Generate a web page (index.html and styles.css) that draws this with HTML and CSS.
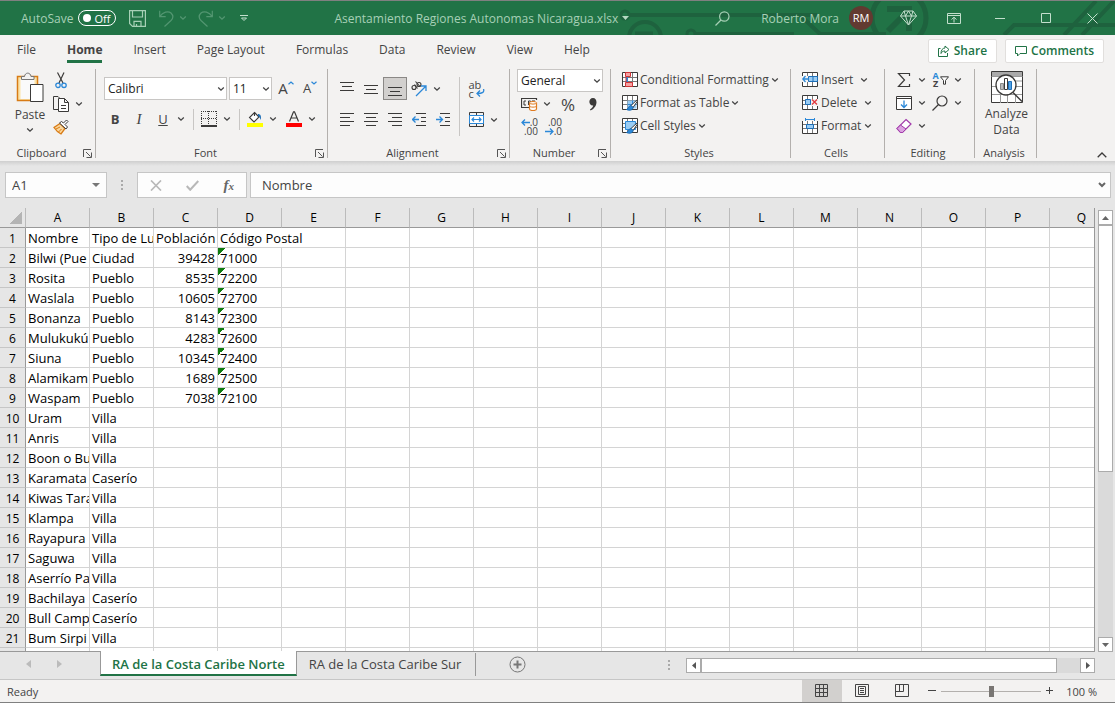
FILE: index.html
```html
<!DOCTYPE html>
<html lang="en">
<head>
  <meta charset="UTF-8">
  <meta name="viewport" content="width=device-width, initial-scale=1.0">
  <title>Asentamiento Regiones Autonomas Nicaragua.xlsx</title>
  <link rel="stylesheet" href="styles.css">
</head>
<body>
  <svg class="defs" width="0" height="0">
    <symbol id="chev" viewBox="0 0 8 8"><path d="M1.2 2.6L4 5.2L6.8 2.6" fill="none" stroke="currentColor" stroke-width="1.3"/></symbol>
    <symbol id="launch" viewBox="0 0 9 9"><path d="M.5 8V.5H8M3 3l4.500 4.500M8.500 3.500v5h-5" fill="none" stroke="#555"/></symbol>
    <symbol id="cellgrid" viewBox="0 0 16 16"><path d="M.5.5h15v14H.5z" fill="#fff" stroke="#3b3a39"/><path d="M5.500 1v13M10.500 1v13M1 5.500h14M1 9.500h14" stroke="#777" fill="none"/></symbol>
    <symbol id="brush" viewBox="0 0 12 12"><path d="M11.500.5L5 6.500l2 2L11.500 2z" fill="#fff" stroke="#3b3a39"/><path d="M5 6.500C2.500 6.500 3 9.500.5 10.500c3 1.500 6.500.5 6.500-2z" fill="#2b88d8" stroke="#1e6fb8"/></symbol>
  </svg>

  <header class="titlebar">
    <svg class="circuit" width="497" height="34" viewBox="0 0 497 34" fill="none" stroke="#1e623e" stroke-width="4">
      <circle cx="7" cy="14" r="4" stroke-width="3"/><path d="M12 14h187"/>
      <circle cx="27" cy="37" r="16"/><path d="M17 33h18" stroke-width="5"/>
      <circle cx="73" cy="33" r="4" stroke-width="3"/><path d="M78 33h98M82 14h100l20 19h66"/>
      <circle cx="281" cy="17" r="27" stroke-width="5"/>
      <path d="M270 30L291 9M269 8h22v22" stroke-width="6"/>
      <path d="M386 34l10-10h101M446 34L478 0M464 34L496 0"/>
    </svg>
    <div class="quick">
      <label class="autosave">AutoSave
        <input type="checkbox">
        <span class="switch"><i></i>Off</span>
      </label>
      <button class="plain save" aria-label="Save"><svg width="17" height="17" viewBox="0 0 17 17" fill="none" stroke="#a7d0b6" stroke-width="1.2"><path d="M.6.6h15.800v15.800H3.500L.6 13.500zM3.500.6v6.400h10V.6M5 16.400v-5h7v5M7.500 16.400v-2.500"/></svg></button>
      <button class="plain undo" aria-label="Undo"><svg width="15" height="17" viewBox="0 0 15 17" fill="none" stroke="#539671" stroke-width="1.2"><path d="M.7.7v6h6M.7 6.700C4 2 9 .5 12 3c2.500 2.500 2 5.500 0 7.500L5.500 16.500"/></svg></button>
      <button class="plain" aria-label="Undo list"><svg width="8" height="8" color="#539671"><use href="#chev"/></svg></button>
      <button class="plain redo" aria-label="Redo"><svg width="15" height="17" viewBox="0 0 15 17" fill="none" stroke="#539671" stroke-width="1.2"><path d="M14.300.7v6h-6M14.300 6.700C11 2 6 .5 3 3c-2.500 2.500-2 5.500 0 7.500l6.500 6"/></svg></button>
      <button class="plain" aria-label="Redo list"><svg width="8" height="8" color="#539671"><use href="#chev"/></svg></button>
      <button class="plain more" aria-label="Customize toolbar"><svg width="8" height="8" viewBox="0 0 8 8" fill="none" stroke="#c3dfcd"><path d="M0 1.500h8M1.500 4L4 6.500L6.500 4z"/></svg></button>
    </div>
    <div class="doc">Asentamiento Regiones Autonomas Nicaragua.xlsx
      <svg width="7" height="4" viewBox="0 0 7 4"><path d="M0 0h7L3.500 4z" fill="#b5d8c2"/></svg>
    </div>
    <div class="account">
      <button class="plain" aria-label="Search"><svg width="15" height="15" viewBox="0 0 15 15" fill="none" stroke="#a7d0b6" stroke-width="1.200"><circle cx="9.300" cy="5.500" r="4.700"/><path d="M6 9L.5 14.500"/></svg></button>
      <span class="user">Roberto Mora</span>
      <span class="avatar">RM</span>
      <button class="plain gem" aria-label="Premium"><svg width="17" height="16" viewBox="0 0 17 16" fill="none" stroke="#c3dfcd"><path d="M4 1h9l3.500 5L8.500 15L.5 6zM.5 6h16M4 1l1.500 5l3 9l3-9L13 1M5.500 6L8.500 1l3 5"/></svg></button>
      <button class="plain display" aria-label="Ribbon display options"><svg width="14" height="11" viewBox="0 0 14 11" fill="none" stroke="#c3dfcd"><path d="M.5.5h13v10H.5zM.5 2.500h13M7 9.500v-5M4.500 6.500L7 4.200l2.500 2.300"/></svg></button>
      <button class="plain win" aria-label="Minimize"><svg width="11" height="11" viewBox="0 0 11 11"><path d="M0 5.500h10" stroke="#c3dfcd"/></svg></button>
      <button class="plain win" aria-label="Maximize"><svg width="11" height="11" viewBox="0 0 11 11"><path d="M.5.5h9v9h-9z" fill="none" stroke="#c3dfcd"/></svg></button>
      <button class="plain win" aria-label="Close"><svg width="11" height="11" viewBox="0 0 11 11"><path d="M.5.5l10 10M10.500.5l-10 10" stroke="#c3dfcd"/></svg></button>
    </div>
  </header>

  <nav class="tabs">
    <a href="#">File</a>
    <a href="#" class="active">Home</a>
    <a href="#">Insert</a>
    <a href="#">Page Layout</a>
    <a href="#">Formulas</a>
    <a href="#">Data</a>
    <a href="#">Review</a>
    <a href="#">View</a>
    <a href="#">Help</a>
    <div class="share">
      <button><svg width="12" height="12" viewBox="0 0 12 12" fill="none" stroke="#217346"><path d="M2.500 3.500h-2v8h9V8"/><path d="M7 1l4 3.500L7 8V6C5 6 4 6.500 3 8.500C3 5 4.500 3.200 7 3z"/></svg>Share</button>
      <button><svg width="12" height="12" viewBox="0 0 12 12" fill="none" stroke="#217346"><path d="M.5 1.500h11v7H5l-2.500 2.500V8.500h-2z"/></svg>Comments</button>
    </div>
  </nav>

  <section class="ribbon">
    <div class="group clipboard">
      <div class="tools">
        <button class="big paste">
          <svg width="28" height="31" viewBox="0 0 28 31"><path d="M1.500 4.500h20v24h-20z" fill="#fbe3a7" stroke="#d87b15" stroke-width="1.500"/><path d="M4.500 7h14v20h-14z" fill="#fafafa"/><path d="M5.500 7.500v-3h3c.5-4.500 6-4.500 6.500 0h3v3z" fill="#f3f2f1" stroke="#777"/><path d="M14.500 12.500h12.500v17H14.500z" fill="#fff" stroke="#3b3a39"/></svg>
          Paste
          <svg width="8" height="8"><use href="#chev"/></svg>
        </button>
        <div class="stack">
          <button class="icon" aria-label="Cut"><svg width="12" height="17" viewBox="0 0 12 17" fill="none"><path d="M2.500.5L8 11M9 .5L4 11" stroke="#3b3a39" stroke-width="1.200"/><circle cx="3" cy="13.300" r="2.200" stroke="#2b88d8" stroke-width="1.300"/><circle cx="9" cy="13.300" r="2.200" stroke="#2b88d8" stroke-width="1.300"/></svg></button>
          <div class="row">
            <button class="icon" aria-label="Copy"><svg width="16" height="16" viewBox="0 0 16 16" stroke="#3b3a39" fill="#fff"><path d="M5 .5H.5v13H6M5 .5L7 2.500" fill="none"/><path d="M5.500 2.500h6l4 4v9h-10zM11.500 2.500v4h4M8 9.500h5M8 12.500h5"/></svg></button>
            <button class="arrow" aria-label="Copy options"><svg width="8" height="8"><use href="#chev"/></svg></button>
          </div>
          <button class="icon" aria-label="Format Painter"><svg width="16" height="16" viewBox="0 0 16 16"><path d="M7 4.500l-6 4c2 3 4 5 7 6.500l4-5.500z" fill="#fbd69a" stroke="#d87b15" stroke-width="1.300"/><path d="M3 10l4-2M5.500 13l3-3" stroke="#d87b15"/><path d="M6.500 4l6.500 6l1.500-2l-2.500-2.500l3-3L13.500 1l-3 3L8.500 2.500z" fill="#fff" stroke="#3b3a39"/></svg></button>
        </div>
      </div>
      <div class="caption"><span>Clipboard</span><button class="plain" aria-label="Clipboard settings"><svg width="9" height="9"><use href="#launch"/></svg></button></div>
    </div>

    <div class="group font">
      <div class="tools">
        <div class="row">
          <span class="combo family"><select aria-label="Font"><option>Calibri</option></select><svg width="8" height="8"><use href="#chev"/></svg></span>
          <span class="combo size"><select aria-label="Font size"><option>11</option></select><svg width="8" height="8"><use href="#chev"/></svg></span>
          <button class="icon grow" aria-label="Increase font size"><span class="big-a">A</span><svg width="6" height="4" viewBox="0 0 6 4"><path d="M.5 3.300L3 1l2.500 2.300" stroke="#2b88d8" fill="none" stroke-width="1.200"/></svg></button>
          <button class="icon grow" aria-label="Decrease font size"><span class="small-a">A</span><svg width="6" height="4" viewBox="0 0 6 4"><path d="M.5.7L3 3L5.500.7" stroke="#2b88d8" fill="none" stroke-width="1.200"/></svg></button>
        </div>
        <div class="row">
          <button class="icon letter"><b>B</b></button>
          <button class="icon letter"><i>I</i></button>
          <button class="icon letter"><u>U</u></button>
          <button class="arrow" aria-label="Underline styles"><svg width="8" height="8"><use href="#chev"/></svg></button>
          <span class="sep"></span>
          <button class="icon" aria-label="Borders"><svg width="16" height="16" viewBox="0 0 16 16" fill="none" stroke="#3b3a39"><path d="M.5 0v15M15.500 0v15M7.500 0v15M0 .5h16M0 7.500h16" stroke-dasharray="1 1"/><path d="M0 15h16" stroke-width="2"/></svg></button>
          <button class="arrow" aria-label="Border styles"><svg width="8" height="8"><use href="#chev"/></svg></button>
          <span class="sep"></span>
          <button class="icon" aria-label="Fill color"><svg width="16" height="16" viewBox="0 0 16 16"><path d="M7.500 1.500l4.500 4.500l-5 5L2.500 6.500zM7.500 1.500V5" fill="#fff" stroke="#3b3a39" stroke-width="1.100"/><path d="M11 3c2.500 0 3.500 2 2.800 6c-.8-1.500-.8-3-2.800-4z" fill="#1e6fb8"/><path d="M0 12h16v4H0z" fill="#ff0"/></svg></button>
          <button class="arrow" aria-label="Fill colors"><svg width="8" height="8"><use href="#chev"/></svg></button>
          <button class="icon colour" aria-label="Font color"><svg width="16" height="16" viewBox="0 0 16 16"><path d="M3.500 10.500L7.500.8h1l4 9.700M5 7h6" fill="none" stroke="#3b3a39" stroke-width="1.200"/><path d="M0 12h16v4H0z" fill="#f00"/></svg></button>
          <button class="arrow" aria-label="Font colors"><svg width="8" height="8"><use href="#chev"/></svg></button>
        </div>
      </div>
      <div class="caption"><span>Font</span><button class="plain" aria-label="Font settings"><svg width="9" height="9"><use href="#launch"/></svg></button></div>
    </div>

    <div class="group alignment">
      <div class="tools">
        <div class="lines">
          <div class="row">
            <button class="icon" aria-label="Top Align"><svg width="14" height="14" viewBox="0 0 14 14" stroke="#3b3a39"><path d="M0 .5h14M2 4.500h10M0 8.500h14"/></svg></button>
            <button class="icon" aria-label="Middle Align"><svg width="14" height="14" viewBox="0 0 14 14" stroke="#3b3a39"><path d="M0 3.500h14M2 7.500h10M0 11.500h14"/></svg></button>
            <button class="icon pressed" aria-label="Bottom Align"><svg width="14" height="14" viewBox="0 0 14 14" stroke="#3b3a39"><path d="M0 5.500h14M2 9.500h10M0 13.500h14"/></svg></button>
            <button class="icon" aria-label="Orientation"><svg width="16" height="16" viewBox="0 0 16 16" fill="none"><g stroke="#3b3a39" stroke-width="1.100"><circle cx="3" cy="6.500" r="2"/><path d="M3.500 3.500l3 4"/><circle cx="8" cy="3.500" r="2"/><path d="M4.500.5l4.500 5"/></g><path d="M5 15L14.500 5.500M10 5h5v5" stroke="#2b88d8" stroke-width="1.300"/></svg></button>
            <button class="arrow" aria-label="Orientation options"><svg width="8" height="8"><use href="#chev"/></svg></button>
          </div>
          <div class="row">
            <button class="icon" aria-label="Align Left"><svg width="14" height="14" viewBox="0 0 14 14" stroke="#3b3a39"><path d="M0 .5h14M0 4.500h10M0 8.500h14M0 12.500h10"/></svg></button>
            <button class="icon" aria-label="Center"><svg width="14" height="14" viewBox="0 0 14 14" stroke="#3b3a39"><path d="M0 .5h14M2 4.500h10M0 8.500h14M2 12.500h10"/></svg></button>
            <button class="icon" aria-label="Align Right"><svg width="14" height="14" viewBox="0 0 14 14" stroke="#3b3a39"><path d="M0 .5h14M4 4.500h10M0 8.500h14M4 12.500h10"/></svg></button>
            <button class="icon" aria-label="Decrease Indent"><svg width="14" height="14" viewBox="0 0 14 14" fill="none" stroke="#3b3a39"><path d="M4 .5h10M9 4.500h5M9 8.500h5M4 12.500h10"/><path d="M7 6.500H.8M3.500 3.500l-3 3l3 3" stroke="#2b88d8" stroke-width="1.300"/></svg></button>
            <button class="icon" aria-label="Increase Indent"><svg width="14" height="14" viewBox="0 0 14 14" fill="none" stroke="#3b3a39"><path d="M4 .5h10M9 4.500h5M9 8.500h5M4 12.500h10"/><path d="M0 6.500h6.200M3.500 3.500l3 3l-3 3" stroke="#2b88d8" stroke-width="1.300"/></svg></button>
          </div>
        </div>
        <span class="sep tall"></span>
        <div class="lines">
          <button class="icon wrap" aria-label="Wrap Text"><span>ab<br>c</span><svg width="9" height="8" viewBox="0 0 9 8"><path d="M7.500 0c1 3-.5 4.500-6.500 4.500M4 1.500l-3 3l3 3" fill="none" stroke="#2b88d8" stroke-width="1.300"/></svg></button>
          <div class="row">
            <button class="icon" aria-label="Merge &amp; Center"><svg width="15" height="15" viewBox="0 0 15 15" fill="none" stroke="#3b3a39"><path d="M.5.5h14v14H.5zM7.500 0v3M7.500 12v3"/><path d="M.5 3.500h14v8H.5z" fill="#fff" stroke="#2b88d8"/><path d="M3 7.500h9M5 5.500l-2 2l2 2M10 5.500l2 2l-2 2" stroke="#2b88d8" stroke-width="1.200"/></svg></button>
            <button class="arrow" aria-label="Merge options"><svg width="8" height="8"><use href="#chev"/></svg></button>
          </div>
        </div>
      </div>
      <div class="caption"><span>Alignment</span><button class="plain" aria-label="Alignment settings"><svg width="9" height="9"><use href="#launch"/></svg></button></div>
    </div>

    <div class="group number">
      <div class="tools">
        <span class="combo format"><select aria-label="Number format"><option>General</option></select><svg width="8" height="8"><use href="#chev"/></svg></span>
        <div class="row">
          <button class="icon" aria-label="Accounting format"><svg width="17" height="14" viewBox="0 0 17 14" fill="none"><path d="M15.500 3V1.500H.5v9H8" stroke="#3b3a39" stroke-width="1.200"/><path d="M5 4H3v4h2M7.500 8V4h2v2h-2M11 4h3" stroke="#3b3a39"/><path d="M8.500 6v6c0 2 7 2 7 0V6" fill="#fff" stroke="#e07b20" stroke-width="1.200"/><ellipse cx="12" cy="5.800" rx="3.500" ry="1.300" fill="#fff" stroke="#e07b20"/><path d="M8.500 9c0 1.500 7 1.500 7 0" stroke="#e07b20"/></svg></button>
          <button class="arrow" aria-label="Currencies"><svg width="8" height="8"><use href="#chev"/></svg></button>
          <button class="icon percent" aria-label="Percent Style">%</button>
          <button class="icon comma" aria-label="Comma Style"><svg width="8" height="13" viewBox="0 0 8 13"><path d="M4 0c5 0 5 9-2.500 12.500l-.5-1c2-1.200 3-2.500 3.200-4C-.8 8 -1 0 4 0z" fill="#3b3a39"/></svg></button>
        </div>
        <div class="row">
          <button class="icon decimals" aria-label="Increase Decimal"><span><svg width="9" height="7" viewBox="0 0 9 7"><path d="M9 3.500H1M4 .5l-3 3l3 3" fill="none" stroke="#2b88d8" stroke-width="1.300"/></svg>.0</span><span>.00</span></button>
          <button class="icon decimals" aria-label="Decrease Decimal"><span>.00</span><span><svg width="9" height="7" viewBox="0 0 9 7"><path d="M0 3.500h8M5 .5l3 3l-3 3" fill="none" stroke="#2b88d8" stroke-width="1.300"/></svg>.0</span></button>
        </div>
      </div>
      <div class="caption"><span>Number</span><button class="plain" aria-label="Number settings"><svg width="9" height="9"><use href="#launch"/></svg></button></div>
    </div>

    <div class="group styles">
      <div class="tools">
        <button class="wide"><svg width="16" height="16" viewBox="0 0 16 16"><use href="#cellgrid"/><path d="M3.500.5h5v4h-5zM3.500 10.500h7v4h-7z" fill="#f4a3a3" stroke="#d13438"/><path d="M4 5h2v5H4z" fill="#2b88d8"/><path d="M4 5v5" stroke="#d13438"/></svg>Conditional Formatting<svg width="8" height="8"><use href="#chev"/></svg></button>
        <button class="wide"><svg width="16" height="16" viewBox="0 0 16 16"><use href="#cellgrid"/><path d="M5.500 5.500h9v8h-9z" fill="#9accf3"/><path d="M5.500 9.500h9M10.500 5.500v8" stroke="#2b88d8"/><use href="#brush" x="4" y="4" width="12" height="12"/></svg>Format as Table<svg width="8" height="8"><use href="#chev"/></svg></button>
        <button class="wide"><svg width="16" height="16" viewBox="0 0 16 16"><use href="#cellgrid"/><path d="M3.500 3.500h10v8h-10z" fill="#9accf3" stroke="#2b88d8"/><use href="#brush" x="4" y="4" width="12" height="12"/></svg>Cell Styles<svg width="8" height="8"><use href="#chev"/></svg></button>
      </div>
      <div class="caption"><span>Styles</span></div>
    </div>

    <div class="group cells">
      <div class="tools">
        <button class="wide insert"><svg width="16" height="16" viewBox="0 0 16 16"><use href="#cellgrid"/><path d="M0 4h8v6H0z" fill="#f3f2f1"/><path d="M6.500 4.500h9v5h-9z" fill="#9accf3" stroke="#1e6fb8"/><path d="M11 4.500v5" stroke="#1e6fb8"/><path d="M7 7H1M3.500 4L.8 7l2.700 3" fill="none" stroke="#2b88d8" stroke-width="1.300"/></svg><span>Insert</span><svg width="8" height="8"><use href="#chev"/></svg></button>
        <button class="wide delete"><svg width="16" height="16" viewBox="0 0 16 16"><use href="#cellgrid"/><path d="M9 4h7v7H9z" fill="#f3f2f1"/><path d="M3.500 4.500h5v5h-5z" fill="#9accf3" stroke="#1e6fb8"/><path d="M10 4.500l5 5M15 4.500l-5 5" stroke="#e0393e" stroke-width="1.400"/></svg><span>Delete</span><svg width="8" height="8"><use href="#chev"/></svg></button>
        <button class="wide"><svg width="16" height="16" viewBox="0 0 16 16"><use href="#cellgrid" y="1" height="16"/><path d="M0 0h16v3H0z" fill="#f3f2f1"/><path d="M4.500 6.500h7v4h-7z" fill="#9accf3" stroke="#1e6fb8"/><path d="M3.500 0v3M12.500 0v3M3.500 1.500h9" stroke="#2b88d8"/></svg><span>Format</span><svg width="8" height="8"><use href="#chev"/></svg></button>
      </div>
      <div class="caption"><span>Cells</span></div>
    </div>

    <div class="group editing">
      <div class="tools">
        <div class="row">
          <button class="icon" aria-label="AutoSum"><svg width="16" height="16" viewBox="0 0 16 16"><path d="M13.500 4V1.500H2.500L8.500 8l-6 6.500h11V12" fill="none" stroke="#3b3a39" stroke-width="1.200"/></svg></button>
          <button class="arrow" aria-label="Functions"><svg width="8" height="8"><use href="#chev"/></svg></button>
          <button class="icon sort" aria-label="Sort &amp; Filter"><span><b>A</b><b>Z</b></span><svg width="9" height="9" viewBox="0 0 9 9"><path d="M.5.8h8L5.500 4.500v3.700h-2V4.500z" fill="#fff" stroke="#3b3a39"/></svg></button>
          <button class="arrow" aria-label="Sort options"><svg width="8" height="8"><use href="#chev"/></svg></button>
        </div>
        <div class="row">
          <button class="icon" aria-label="Fill"><svg width="16" height="14" viewBox="0 0 16 14" fill="#fff" stroke="#3b3a39"><path d="M.5.5h15v13H.5zM.5 2.500h15"/><path d="M8 4.500v7M5 8.500l3 3l3-3" fill="none" stroke="#2b88d8" stroke-width="1.300"/></svg></button>
          <button class="arrow" aria-label="Fill options"><svg width="8" height="8"><use href="#chev"/></svg></button>
          <button class="icon" aria-label="Find &amp; Select"><svg width="16" height="16" viewBox="0 0 16 16" fill="none" stroke="#3b3a39" stroke-width="1.200"><circle cx="10" cy="6" r="5"/><path d="M6.500 9.500L.5 15.500"/></svg></button>
          <button class="arrow" aria-label="Find options"><svg width="8" height="8"><use href="#chev"/></svg></button>
        </div>
        <div class="row">
          <button class="icon" aria-label="Clear"><svg width="16" height="16" viewBox="0 0 16 16"><path d="M10 1.500l5 4.500l-8.500 8.500h-2L1 10.500z" fill="#fff" stroke="#a23bab" stroke-width="1.200"/><path d="M4.500 7L1 10.500l3.500 4h2L10 11z" fill="#dba3e0" stroke="#a23bab"/></svg></button>
          <button class="arrow" aria-label="Clear options"><svg width="8" height="8"><use href="#chev"/></svg></button>
        </div>
      </div>
      <div class="caption"><span>Editing</span></div>
    </div>

    <div class="group analysis">
      <div class="tools">
        <button class="big">
          <svg width="32" height="32" viewBox="0 0 32 32"><path d="M.5.5h31v31H.5z" fill="#fff" stroke="#3b3a39"/><path d="M1 1h30v4H1z" fill="#aaa"/><path d="M.5 5.500h31M1 15.500h30M1 23.500h30M9.500 23v9M16.500 23v9M24.500 23v9M24 10h7" stroke="#999"/><circle cx="15" cy="14" r="10" fill="#fff" stroke="#3b3a39" stroke-width="1.300"/><path d="M22 21.500l9 9" stroke="#3b3a39" stroke-width="1.500"/><path d="M9.500 12.500h3v6h-3z" fill="#bbb" stroke="#888"/><path d="M13.500 7.500h3v11h-3z" fill="#fff" stroke="#3b3a39"/><path d="M17.500 10.500h3v8h-3z" fill="#4ea1e6" stroke="#1e6fb8"/></svg>
          Analyze<br>Data
        </button>
      </div>
      <div class="caption"><span>Analysis</span></div>
    </div>
    <button class="plain collapse" aria-label="Collapse ribbon"><svg width="10" height="6" viewBox="0 0 10 6"><path d="M.7 5.200L5 1l4.300 4.200" fill="none" stroke="#3b3a39" stroke-width="1.300"/></svg></button>
  </section>

  <div class="formula-bar">
    <div class="box name-box"><input type="text" value="A1" aria-label="Name box"><button class="plain" aria-label="Names"><svg width="8" height="4" viewBox="0 0 8 4"><path d="M0 0h8L4 4z" fill="#777"/></svg></button></div>
    <span class="dots"></span>
    <div class="box actions">
      <button class="plain" aria-label="Cancel"><svg width="12" height="11" viewBox="0 0 12 11"><path d="M1 .5l10 10M11 .5L1 10.500" stroke="#b8b8b8" stroke-width="1.700"/></svg></button>
      <button class="plain" aria-label="Enter"><svg width="13" height="11" viewBox="0 0 13 11"><path d="M.7 6l3.500 3.800L12.300 1" fill="none" stroke="#b8b8b8" stroke-width="2"/></svg></button>
      <button class="plain fx" aria-label="Insert Function">f<sub>x</sub></button>
    </div>
    <div class="box formula"><input type="text" value="Nombre" aria-label="Formula"><button class="plain" aria-label="Expand formula bar"><svg width="8" height="8" viewBox="0 0 8 8"><path d="M1 2l3 3l3-3" fill="none" stroke="#666" stroke-width="2"/></svg></button></div>
  </div>

  <main class="workspace">
    <div class="sheet">
      <table>
        <thead><tr id="columns"></tr></thead>
        <tbody id="rows"></tbody>
      </table>
    </div>
    <div class="vscroll">
      <button aria-label="Scroll up"><svg width="7" height="4" viewBox="0 0 7 4"><path d="M0 4h7L3.500 0z" fill="#666"/></svg></button>
      <div class="track"><div class="thumb"></div></div>
      <button aria-label="Scroll down"><svg width="7" height="4" viewBox="0 0 7 4"><path d="M0 0h7L3.500 4z" fill="#666"/></svg></button>
    </div>
  </main>

  <div class="sheet-bar">
    <div class="sheet-nav">
      <button class="plain" aria-label="Previous sheet"><svg width="5" height="8" viewBox="0 0 5 8"><path d="M5 0v8L0 4z" fill="#bbb"/></svg></button>
      <button class="plain" aria-label="Next sheet"><svg width="5" height="8" viewBox="0 0 5 8"><path d="M0 0v8l5-4z" fill="#bbb"/></svg></button>
    </div>
    <a href="#" class="sheet-tab current">RA de la Costa Caribe Norte</a>
    <a href="#" class="sheet-tab">RA de la Costa Caribe Sur</a>
    <button class="plain add" aria-label="New sheet"><svg width="17" height="17" viewBox="0 0 17 17" fill="none" stroke="#777"><circle cx="8.500" cy="8.500" r="7.500"/><path d="M8.500 4.500v8M4.500 8.500h8" stroke-width="2"/></svg></button>
    <span class="dots"></span>
    <div class="hscroll">
      <button aria-label="Scroll left"><svg width="4" height="7" viewBox="0 0 4 7"><path d="M4 0v7L0 3.500z" fill="#555"/></svg></button>
      <div class="track"><div class="thumb"></div></div>
      <button aria-label="Scroll right"><svg width="4" height="7" viewBox="0 0 4 7"><path d="M0 0v7l4-3.500z" fill="#555"/></svg></button>
    </div>
  </div>

  <footer class="status">
    <span>Ready</span>
    <div class="views">
      <button class="on" aria-label="Normal"><svg width="14" height="14" viewBox="0 0 14 14" fill="none" stroke="#444"><path d="M.5.5h12v12H.5zM4.500 0v13M8.500 0v13M0 4.500h13M0 8.500h13"/></svg></button>
      <button aria-label="Page Layout"><svg width="14" height="14" viewBox="0 0 14 14" fill="none" stroke="#444"><path d="M.5.500h13v12H.5zM3.500 2.500h7v8h-7zM5 4.500h4M5 6.500h4M5 8.500h4"/></svg></button>
      <button aria-label="Page Break Preview"><svg width="14" height="14" viewBox="0 0 14 14" fill="none" stroke="#444"><path d="M.5.500h13v12H.5zM4.500 0v7M8.500 0v7.500H0"/></svg></button>
    </div>
    <button class="plain" aria-label="Zoom out"><svg width="8" height="8" viewBox="0 0 8 8"><path d="M0 3.500h8" stroke="#444"/></svg></button>
    <input type="range" min="0" max="100" value="50" aria-label="Zoom">
    <button class="plain" aria-label="Zoom in"><svg width="8" height="8" viewBox="0 0 8 8"><path d="M0 3.500h7M3.500 0v7" stroke="#444"/></svg></button>
    <span class="zoom">100 %</span>
  </footer>

  <script>
    let data = [
      ['Nombre', 'Tipo de Lu', 'Población', 'Código Postal'],
      ['Bilwi (Pue', 'Ciudad', 39428, '71000'],
      ['Rosita', 'Pueblo', 8535, '72200'],
      ['Waslala', 'Pueblo', 10605, '72700'],
      ['Bonanza', 'Pueblo', 8143, '72300'],
      ['Mulukukú', 'Pueblo', 4283, '72600'],
      ['Siuna', 'Pueblo', 10345, '72400'],
      ['Alamikam', 'Pueblo', 1689, '72500'],
      ['Waspam', 'Pueblo', 7038, '72100'],
      ['Uram', 'Villa'],
      ['Anris', 'Villa'],
      ['Boon o Bu', 'Villa'],
      ['Karamata', 'Caserío'],
      ['Kiwas Tara', 'Villa'],
      ['Klampa', 'Villa'],
      ['Rayapura', 'Villa'],
      ['Saguwa', 'Villa'],
      ['Aserrío Pa', 'Villa'],
      ['Bachilaya', 'Caserío'],
      ['Bull Camp', 'Caserío'],
      ['Bum Sirpi', 'Villa'],
      []
    ];
    let letters = 'ABCDEFGHIJKLMNOPQ';

    let head = '<th class="corner"></th>';
    for (let letter of letters) {
      head += '<th>' + letter + '</th>';
    }
    document.getElementById('columns').innerHTML = head;

    let body = '';
    data.forEach(function (row, r) {
      body += '<tr><th>' + (r + 1) + '</th>';
      for (let c = 0; c < letters.length; c++) {
        let value = row[c] === undefined ? '' : row[c];
        if (r === 0 && c === 3) {
          // long heading runs over the empty cell beside it
          body += '<td colspan="2">' + value + '</td>';
          c++;
        } else if (typeof value === 'number') {
          body += '<td class="num">' + value + '</td>';
        } else if (c === 3 && value) {
          body += '<td class="flag">' + value + '</td>';
        } else {
          body += '<td>' + value + '</td>';
        }
      }
      body += '</tr>';
    });
    document.getElementById('rows').innerHTML = body;
  </script>
</body>
</html>
```
FILE: styles.css
```css
* {
  box-sizing: border-box;
}

body {
  margin: 0;
  height: 100vh;
  display: flex;
  flex-direction: column;
  overflow: hidden;
  font-family: "Open Sans", "Noto Sans", sans-serif;
  font-size: 12px;
  color: #444;
  background: #e6e6e6;
}

button,
input,
select {
  font: inherit;
  color: inherit;
}

button {
  display: flex;
  align-items: center;
  justify-content: center;
  padding: 0;
  border: 0;
  background: none;
}

svg {
  display: block;
  flex: none;
}

a {
  color: inherit;
  text-decoration: none;
}

.defs {
  position: absolute;
}

/* title bar */
.titlebar {
  position: relative;
  display: flex;
  flex: none;
  justify-content: space-between;
  align-items: center;
  height: 35px;
  padding: 0 17px 0 21px;
  border-top: 1px solid #808080;
  background: #217346;
  color: #a7d0b6;
}

.circuit {
  position: absolute;
  top: 0;
  right: 0;
}

.quick,
.doc,
.account {
  position: relative;
  display: flex;
  align-items: center;
}

.autosave {
  display: flex;
  align-items: center;
  gap: 5px;
}

.autosave input {
  position: absolute;
  opacity: 0;
}

.switch {
  display: flex;
  align-items: center;
  justify-content: space-between;
  width: 38px;
  height: 16px;
  padding: 0 5px 0 4px;
  border: 1px solid #fff;
  border-radius: 8px;
  color: #fff;
  font-size: 11px;
}

.switch i {
  width: 8px;
  height: 8px;
  border-radius: 50%;
  background: #fff;
}

.save {
  margin: 0 13px;
}

.undo,
.redo {
  margin-right: 5px;
}

.redo {
  margin-left: 11px;
}

.more {
  margin-left: 14px;
}

.doc {
  gap: 4px;
}

.user {
  margin-left: 31px;
}

.avatar {
  width: 24px;
  margin-left: 10px;
  border-radius: 50%;
  background: #623a31;
  color: #fff;
  font-size: 11px;
  line-height: 24px;
  text-align: center;
}

.gem {
  margin-left: 27px;
}

.display {
  margin-left: 30px;
}

.win {
  margin-left: 35px;
}

.display + .win {
  margin-left: 34px;
}

/* ribbon tabs */
.tabs {
  display: flex;
  flex: none;
  align-items: center;
  gap: 31px;
  height: 31px;
  padding: 0 11px 0 17px;
  background: #f3f2f1;
}

.tabs a {
  padding-top: 2px;
  line-height: 20px;
  border-bottom: 3px solid transparent;
}

.tabs .active {
  font-weight: bold;
  border-color: #217346;
}

.share {
  display: flex;
  gap: 8px;
  margin-left: auto;
}

.share button {
  gap: 4px;
  height: 24px;
  padding: 0 9px;
  border: 1px solid #e1dfdd;
  border-radius: 2px;
  background: #fff;
  color: #217346;
  font-weight: 600;
}

/* ribbon */
.ribbon {
  display: flex;
  flex: none;
  height: 95px;
  padding: 3px 8px 3px 0;
  background: #f3f2f1;
}

.group {
  display: flex;
  flex-direction: column;
  justify-content: space-between;
  border-right: 1px solid #b3b0ad;
}

.row {
  display: flex;
  align-items: center;
}

.icon {
  position: relative;
  width: 24px;
  height: 22px;
}

.arrow {
  width: 12px;
  height: 22px;
}

.caption {
  display: flex;
  align-items: center;
  padding-right: 3px;
  font-size: 11px;
  line-height: 10px;
}

.caption span {
  flex: 1;
  text-align: center;
}

.sep {
  width: 1px;
  height: 21px;
  margin: 0 3px 0 6px;
  background: #c8c6c4;
}

.big {
  flex-direction: column;
  line-height: 16px;
}

.clipboard {
  width: 96px;
}

.clipboard .tools {
  display: flex;
  padding-left: 15px;
}

.paste {
  width: 30px;
  height: 62px;
  margin-top: 3px;
  justify-content: space-between;
}

.stack {
  padding-left: 4px;
}

.stack .icon {
  height: 23px;
}

.font {
  width: 232px;
}

.font .tools {
  display: flex;
  flex-direction: column;
  gap: 8px;
  padding: 8px 0 0 7px;
}

.combo {
  position: relative;
  height: 23px;
}

.combo select {
  width: 100%;
  height: 100%;
  padding: 0 3px;
  border: 1px solid #c8c6c4;
  border-radius: 0;
  background: #fff;
  color: #222;
  appearance: none;
}

.combo svg {
  position: absolute;
  top: 8px;
  right: 2px;
}

.family {
  width: 123px;
  margin: 0 1px;
}

.size {
  width: 43px;
  margin: 0 2px 0 1px;
}

.grow {
  align-items: flex-start;
}

.big-a {
  font-size: 15px;
  line-height: 20px;
}

.small-a {
  font-size: 13px;
  line-height: 20px;
}

.grow svg {
  margin-top: 3px;
}

.letter {
  font-size: 13px;
}

.letter i {
  font-family: "Liberation Serif", serif;
  font-size: 15px;
}

.colour {
  margin-left: 3px;
}

.alignment {
  width: 182px;
}

.alignment .tools {
  display: flex;
  padding: 8px 0 0 7px;
}

.lines {
  display: flex;
  flex-direction: column;
  gap: 8px;
}

.alignment .icon {
  height: 23px;
}

.tall {
  height: 59px;
  margin: 0 4px;
}

.pressed {
  border: 1px solid #8a8886;
  background: #d2d0ce;
}

.wrap span {
  width: 15px;
  font-size: 11px;
  line-height: 9px;
  text-align: left;
}

.wrap svg {
  position: absolute;
  right: 3px;
  bottom: 3px;
}

.number {
  width: 101px;
}

.number .tools {
  display: flex;
  flex-direction: column;
  gap: 1px;
  padding-left: 7px;
}

.format {
  width: 86px;
}

.percent {
  width: 30px;
  font-size: 17px;
}

.comma {
  width: 20px;
}

.decimals {
  flex-direction: column;
  align-items: flex-end;
  padding-right: 3px;
  font-size: 10px;
  line-height: 9px;
}

.decimals span {
  display: flex;
  align-items: center;
}

.styles {
  width: 180px;
}

.styles .tools,
.cells .tools {
  display: flex;
  flex-direction: column;
  gap: 1px;
  padding-left: 11px;
}

.wide {
  justify-content: flex-start;
  gap: 3px;
  height: 22px;
  line-height: 16px;
}

.styles .wide {
  gap: 2px;
}

.cells {
  width: 94px;
}

.insert span,
.delete span {
  padding-right: 4px;
}

.editing {
  width: 90px;
}

.editing .tools {
  display: flex;
  flex-direction: column;
  gap: 1px;
  padding-left: 7px;
}

.sort span {
  width: 8px;
  font-size: 9px;
  line-height: 8px;
}

.sort b {
  display: block;
}

.sort b:first-child {
  color: #2b88d8;
}

.analysis {
  width: 62px;
}

.analysis .big {
  display: block;
  width: 100%;
  padding: 2px 0 0 2px;
}

.analysis svg {
  margin: 0 auto 3px;
}

.collapse {
  align-self: flex-end;
  margin-left: auto;
}

/* formula bar */
.formula-bar {
  display: flex;
  flex: none;
  align-items: center;
  height: 47px;
  padding: 1px 4px 0 5px;
  background: linear-gradient(#cfcfcf, #e6e6e6 5px);
}

.box {
  display: flex;
  align-items: center;
  height: 26px;
  border: 1px solid #c6c6c6;
  background: #fdfdfd;
}

.box input {
  flex: 1;
  min-width: 0;
  padding: 0 0 0 6px;
  border: 0;
  background: none;
  font-size: 13px;
}

.name-box {
  width: 102px;
  padding-right: 6px;
}

.dots {
  width: 2px;
  height: 10px;
  margin: 0 14px;
  background: repeating-linear-gradient(#aaa 0 2px, transparent 2px 4px);
}

.actions {
  width: 110px;
  justify-content: space-around;
  margin-right: 3px;
}

.fx {
  display: block;
  color: #666;
  font-family: "Liberation Serif", serif;
  font-size: 15px;
  font-style: italic;
  font-weight: bold;
  line-height: 16px;
}

.fx sub {
  font-size: 11px;
  line-height: 8px;
  vertical-align: baseline;
}

.formula {
  flex: 1;
  padding-right: 4px;
}

.formula input {
  padding-left: 11px;
}

/* worksheet */
.workspace {
  display: flex;
  flex: 1;
  min-height: 0;
}

.sheet {
  flex: 1;
  min-width: 0;
  overflow: hidden;
  border-right: 1px solid #999;
  border-bottom: 1px solid #999;
}

.sheet table {
  width: 1114px;
  table-layout: fixed;
  border-collapse: separate;
  border-spacing: 0;
  background: #fff;
  font-size: 13px;
  color: #000;
}

.sheet th,
.sheet td {
  height: 20px;
  padding: 2px 2px 0;
  border-right: 1px solid #d4d4d4;
  border-bottom: 1px solid #d4d4d4;
  line-height: 17px;
  font-weight: normal;
  text-align: left;
  white-space: nowrap;
  overflow: hidden;
}

.sheet th {
  padding: 2px 0 0;
  background: #e6e6e6;
  font-size: 12px;
  text-align: center;
}

.sheet thead th {
  padding: 0;
  border-right: 1px solid #bbb;
  border-bottom: 1px solid #999;
  line-height: 19px;
}

.sheet tbody th {
  border-right: 1px solid #999;
  border-bottom: 1px solid #c6c6c6;
}

.sheet .corner {
  width: 26px;
  background: linear-gradient(135deg, transparent 50%, #b4b4b4 50%) 10px 4px / 12px 12px no-repeat #e6e6e6;
}

.sheet .num {
  text-align: right;
}

.sheet .flag {
  background: linear-gradient(135deg, #107c10 50%, transparent 50%) 0 0 / 7px 7px no-repeat;
}

.vscroll {
  display: flex;
  flex-direction: column;
  width: 15px;
  margin: 2px 2px 0 3px;
}

.vscroll button,
.hscroll button {
  flex: none;
  width: 15px;
  height: 15px;
  border: 1px solid #ababab;
  background: #fff;
}

.track {
  flex: 1;
  background: #dadada;
}

.thumb {
  border: 1px solid #ababab;
  background: #fff;
}

.vscroll .thumb {
  height: 60%;
}

/* sheet tabs */
.sheet-bar {
  display: flex;
  flex: none;
  height: 28px;
  padding-right: 20px;
  border-bottom: 1px solid #c6c6c6;
  font-size: 13px;
}

.sheet-nav {
  display: flex;
  width: 100px;
  padding: 0 38px 3px 26px;
  justify-content: space-between;
}

.sheet-tab {
  height: 23px;
  margin-top: 1px;
  padding: 0 14px 0 12px;
  border-right: 1px solid #999;
  line-height: 22px;
}

.sheet-tab.current {
  height: 25px;
  margin-top: -1px;
  padding: 0 11px;
  border-left: 1px solid #999;
  border-bottom: 2px solid #217346;
  background: #fff;
  color: #217346;
  font-weight: 600;
  line-height: 26px;
}

.add {
  margin: 0 auto 3px 33px;
}

.sheet-bar .dots {
  margin: 8px 16px 0;
}

.hscroll {
  display: flex;
  width: 409px;
  margin-top: 6px;
  height: 15px;
}

.hscroll .thumb {
  width: 94%;
  height: 15px;
}

/* status bar */
.status {
  display: flex;
  flex: none;
  align-items: center;
  height: 23px;
  padding: 0 18px 0 7px;
  border-bottom: 1px solid #808080;
  background: #f3f2f1;
  font-size: 11px;
}

.views {
  display: flex;
  align-self: stretch;
  margin: 0 6px 0 auto;
}

.views button {
  width: 40px;
}

.views .on {
  background: #d2d0ce;
}

.status input {
  width: 100px;
  height: 12px;
  margin: 0 5px;
  appearance: none;
  background: linear-gradient(#b3b0ad, #b3b0ad) 0 6px / 100% 1px no-repeat;
}

.status input::-webkit-slider-thumb {
  appearance: none;
  width: 5px;
  height: 11px;
  background: #797673;
}

.zoom {
  margin-left: 12px;
}
```
